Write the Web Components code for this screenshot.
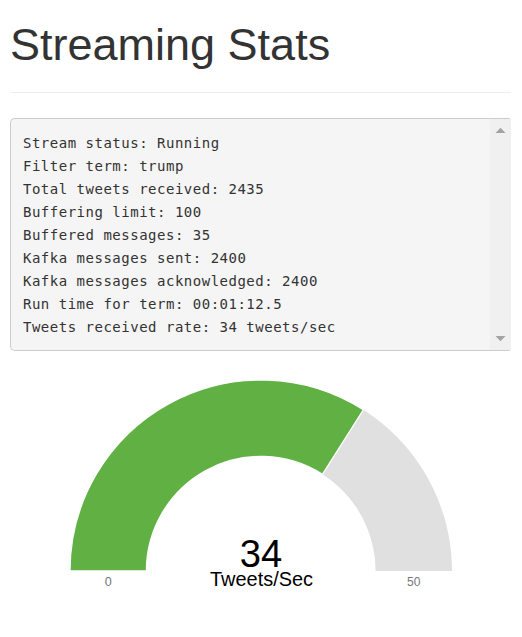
<!DOCTYPE html>
<html lang="en">
<head>
<meta charset="utf-8">
<title>Streaming Stats</title>
<style>
html, body { margin: 0; background: #fff; }
body { height: 637px; overflow: hidden; color: #333; font-family: "Liberation Sans", Arial, sans-serif; }
</style>
</head>
<body>
<stats-page>
  <page-title>Streaming Stats</page-title>
  <stats-log>Stream status: Running
Filter term: trump
Total tweets received: 2435
Buffering limit: 100
Buffered messages: 35
Kafka messages sent: 2400
Kafka messages acknowledged: 2400
Run time for term: 00:01:12.5
Tweets received rate: 34 tweets/sec</stats-log>
  <half-gauge value="34" min="0" max="50" label="Tweets/Sec"></half-gauge>
</stats-page>
<script>
class StatsPage extends HTMLElement {
  constructor() {
    super();
    this.attachShadow({ mode: 'open' }).innerHTML = `
      <style>:host { display: flex; flex-direction: column; width: 501px; padding: 0 11px 0 10px; }</style>
      <slot></slot>`;
  }
}
class PageTitle extends HTMLElement {
  constructor() {
    super();
    this.attachShadow({ mode: 'open' }).innerHTML = `
      <style>
        :host { display: block; height: 92px; border-bottom: 1px solid #eee; margin-bottom: 25px; }
        h1 { margin: 0; padding-top: 20px; font-size: 45px; line-height: 50px; font-weight: 400; white-space: nowrap; }
      </style>
      <h1><slot></slot></h1>`;
  }
}
class StatsLog extends HTMLElement {
  constructor() {
    super();
    this.attachShadow({ mode: 'open' }).innerHTML = `
      <style>
        :host { display: flex; box-sizing: border-box; height: 233px; background: #f5f5f5;
          border: 1px solid #ccc; border-right: 0; border-radius: 5px 3px 3px 5px; overflow: hidden; }
        pre { flex: 1; margin: 0; padding: 13px 0 0 12px; letter-spacing: 0.506px;
          font: 14px/23px "DejaVu Sans Mono", Consolas, monospace; color: #333; }
        .bar { width: 21px; background: #f0f0f0; display: flex; flex-direction: column;
          justify-content: space-between; align-items: center; padding: 8px 0 8px; box-sizing: border-box; }
        svg { display: block; width: 11px; height: 6px; fill: #a3a3a3; }
      </style>
      <pre><slot></slot></pre>
      <div class="bar">
        <svg viewBox="0 0 11 6"><path d="M0.5 6L5.5 0.7L10.5 6Z"/></svg>
        <svg viewBox="0 0 11 6"><path d="M0.5 0H10.5L5.5 5.3Z"/></svg>
      </div>`;
  }
}
class HalfGauge extends HTMLElement {
  connectedCallback() {
    const value = +this.getAttribute('value');
    const min = +this.getAttribute('min');
    const max = +this.getAttribute('max');
    const cx = 251, cy = 220, outer = 191, inner = 114.6;
    const end = Math.PI * (1 - (value - min) / (max - min));
    const pt = (r, a) => (cx + r * Math.cos(a)).toFixed(2) + ' ' + (cy - r * Math.sin(a)).toFixed(2);
    const arc = (a, b) =>
      `M${pt(outer, a)}A${outer} ${outer} 0 0 1 ${pt(outer, b)}L${pt(inner, b)}A${inner} ${inner} 0 0 0 ${pt(inner, a)}Z`;
    this.attachShadow({ mode: 'open' }).innerHTML = `
      <style>
        :host { display: block; }
        svg { display: block; width: 501px; height: 260px; font-family: "Liberation Sans", Arial, sans-serif; }
        text { text-anchor: middle; fill: #000; }
        .limit { font-size: 12.6px; fill: #777; }
      </style>
      <svg viewBox="0 0 501 260">
        <path d="${arc(Math.PI, 0)}" fill="#e0e0e0"/>
        <path d="${arc(Math.PI, end)}" fill="#60b044" stroke="#fff" stroke-width="1.3"/>
        <text x="251" y="216" font-size="38.2">${value}</text>
        <text x="251.5" y="235" font-size="19.5" textLength="103" lengthAdjust="spacingAndGlyphs">${this.getAttribute('label')}</text>
        <text class="limit" x="98.3" y="235">${min}</text>
        <text class="limit" x="403.7" y="235" textLength="13.4" lengthAdjust="spacingAndGlyphs">${max}</text>
      </svg>`;
  }
}
customElements.define('stats-page', StatsPage);
customElements.define('page-title', PageTitle);
customElements.define('stats-log', StatsLog);
customElements.define('half-gauge', HalfGauge);
</script>
</body>
</html>
